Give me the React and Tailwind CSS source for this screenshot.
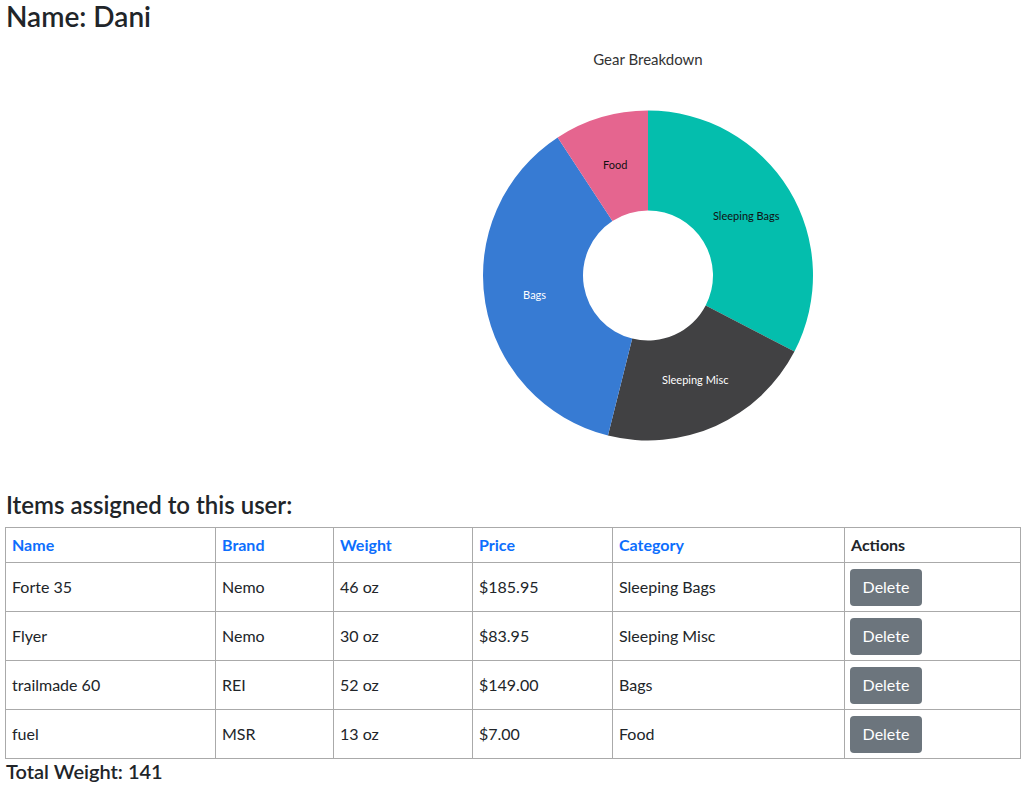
const items = [
  { name: 'Forte 35', brand: 'Nemo', weight: 46, price: '$185.95', category: 'Sleeping Bags' },
  { name: 'Flyer', brand: 'Nemo', weight: 30, price: '$83.95', category: 'Sleeping Misc' },
  { name: 'trailmade 60', brand: 'REI', weight: 52, price: '$149.00', category: 'Bags' },
  { name: 'fuel', brand: 'MSR', weight: 13, price: '$7.00', category: 'Food' },
]

const sliceStyle = {
  'Sleeping Bags': { fill: '#04BEAD', text: '#111' },
  'Sleeping Misc': { fill: '#414143', text: '#fff' },
  Bags: { fill: '#377BD3', text: '#fff' },
  Food: { fill: '#E5658F', text: '#111' },
}

function point(cx, cy, r, deg) {
  const a = (deg * Math.PI) / 180
  return [cx + r * Math.sin(a), cy - r * Math.cos(a)]
}

function DonutChart() {
  const cx = 643
  const cy = 233.5
  const outer = 165
  const inner = 65
  const total = items.reduce((s, i) => s + i.weight, 0)
  let start = 0

  return (
    <svg width="1020" height="449" className="block mt-px">
      <text x={cx} y="23" textAnchor="middle" fontSize="15" fill="#333">
        Gear Breakdown
      </text>
      {items.map((item) => {
        const sweep = (item.weight / total) * 360
        const end = start + sweep
        const [x1, y1] = point(cx, cy, outer, start)
        const [x2, y2] = point(cx, cy, outer, end)
        const [x3, y3] = point(cx, cy, inner, end)
        const [x4, y4] = point(cx, cy, inner, start)
        const large = sweep > 180 ? 1 : 0
        const d = `M${x1} ${y1} A${outer} ${outer} 0 ${large} 1 ${x2} ${y2} L${x3} ${y3} A${inner} ${inner} 0 ${large} 0 ${x4} ${y4} Z`
        const [lx, ly] = point(cx, cy, (outer + inner) / 2, start + sweep / 2)
        const s = sliceStyle[item.category]
        start = end
        return (
          <g key={item.category}>
            <path d={d} fill={s.fill} />
            <text x={lx} y={ly + 4} textAnchor="middle" fontSize="11" fill={s.text}>
              {item.category}
            </text>
          </g>
        )
      })}
    </svg>
  )
}

export default function App() {
  return (
    <div className="px-[5px] text-[#212529] font-['Lato','Noto_Sans',sans-serif]">
      <h3 className="text-[28px] leading-[1.2] font-semibold mb-2 pl-px">Name: Dani</h3>
      <DonutChart />
      <h4 className="text-[24px] leading-[1.2] font-semibold mb-2 pl-px">Items assigned to this user:</h4>
      <table className="w-[1015px] table-fixed border-collapse border border-[#aaa] text-base">
        <colgroup>
          <col className="w-[210px]" />
          <col className="w-[118px]" />
          <col className="w-[139px]" />
          <col className="w-[140px]" />
          <col className="w-[232px]" />
          <col className="w-[176px]" />
        </colgroup>
        <thead>
          <tr className="h-[35px]">
            {['Name', 'Brand', 'Weight', 'Price', 'Category'].map((h) => (
              <th key={h} className="border border-[#aaa] px-[6px] text-left font-bold text-[#0d6efd]">
                {h}
              </th>
            ))}
            <th className="border border-[#aaa] px-[6px] text-left font-bold">Actions</th>
          </tr>
        </thead>
        <tbody>
          {items.map((item) => (
            <tr key={item.name} className="h-[49px]">
              <td className="border border-[#aaa] px-[6px]">{item.name}</td>
              <td className="border border-[#aaa] px-[6px]">{item.brand}</td>
              <td className="border border-[#aaa] px-[6px]">{item.weight} oz</td>
              <td className="border border-[#aaa] px-[6px]">{item.price}</td>
              <td className="border border-[#aaa] px-[6px]">{item.category}</td>
              <td className="border border-[#aaa] px-[5px]">
                <button className="h-[37px] w-[72px] rounded bg-[#6c757d] text-white text-base">
                  Delete
                </button>
              </td>
            </tr>
          ))}
        </tbody>
      </table>
      <h5 className="text-[20px] leading-[1.2] font-semibold pl-px">Total Weight: 141</h5>
    </div>
  )
}
